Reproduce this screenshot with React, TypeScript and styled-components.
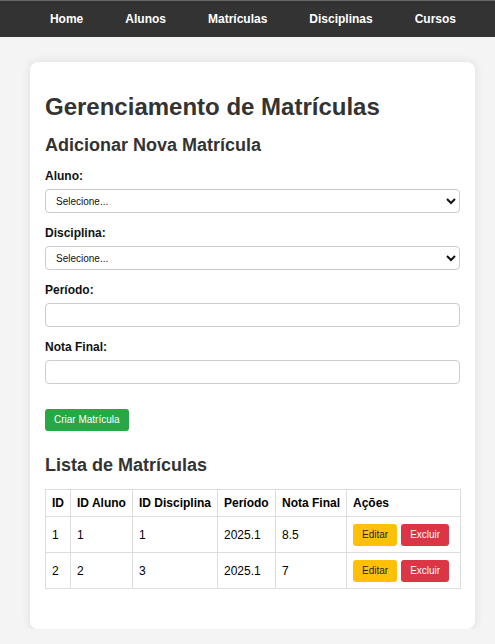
import React from "react";
import styled, { createGlobalStyle } from "styled-components";

const GlobalStyle = createGlobalStyle`
  * { box-sizing: border-box; }
  body {
    margin: 0;
    background: #f4f4f4;
    font-family: "Liberation Sans", Arial, sans-serif;
    color: #333;
  }
`;

const Nav = styled.nav`
  display: flex;
  justify-content: center;
  align-items: center;
  gap: 42px;
  height: 37px;
  padding-left: 11px;
  background: #333;
  border-top: 1px solid #666;
`;

const NavLink = styled.a`
  color: #fff;
  font-size: 12px;
  font-weight: bold;
  line-height: 14px;
  text-decoration: none;
`;

const Card = styled.main`
  margin: 25px 20px 0 30px;
  padding: 15px;
  background: #fff;
  border-radius: 8px;
  box-shadow: 0 0 10px rgba(0, 0, 0, 0.1);
`;

const Title = styled.h1`
  margin: 16px 0 14px;
  font-size: 24px;
  line-height: 28px;
  font-weight: bold;
  color: #333;
`;

const Subtitle = styled.h2<{ $top?: number; $bottom?: number }>`
  margin: ${(p) => p.$top ?? 0}px 0 ${(p) => p.$bottom ?? 13}px;
  font-size: 18px;
  line-height: 21px;
  font-weight: bold;
  color: #333;
`;

const Form = styled.form`
  display: flex;
  flex-direction: column;
`;

const Field = styled.div`
  display: flex;
  flex-direction: column;
  margin-bottom: 13px;
`;

const Label = styled.label`
  display: block;
  margin-bottom: 6px;
  font-size: 12px;
  line-height: 14px;
  font-weight: bold;
  color: #111;
`;

const Select = styled.select`
  width: 100%;
  height: 24px;
  padding: 0 6px;
  border: 1px solid #ccc;
  border-radius: 4px;
  background: #fff;
  font-family: "Liberation Sans", Arial, sans-serif;
  font-size: 10px;
  color: #111;
`;

const Input = styled.input`
  width: 100%;
  height: 24px;
  padding: 0 8px;
  border: 1px solid #ccc;
  border-radius: 4px;
  background: #fff;
  font-family: "Liberation Sans", Arial, sans-serif;
  font-size: 10px;
`;

const Button = styled.button<{ $variant: "success" | "warning" | "danger" }>`
  display: inline-flex;
  align-items: center;
  justify-content: center;
  height: 22px;
  padding: 0 9px;
  border: none;
  border-radius: 3px;
  font-family: "Liberation Sans", Arial, sans-serif;
  font-size: 10px;
  line-height: 12px;
  vertical-align: middle;
  cursor: pointer;
  background: ${(p) =>
    p.$variant === "success" ? "#28a745" : p.$variant === "warning" ? "#ffc107" : "#dc3545"};
  color: ${(p) => (p.$variant === "warning" ? "#212529" : "#fff")};
`;

const SubmitRow = styled.div`
  margin-top: 12px;
`;

const Table = styled.table`
  width: 100%;
  border-collapse: collapse;
  table-layout: fixed;
  margin-bottom: 25px;
  font-size: 12px;
  color: #000;
`;

const Th = styled.th`
  padding: 6px;
  border: 1px solid #ddd;
  text-align: left;
  font-weight: bold;
  line-height: 14px;
  white-space: nowrap;
`;

const Td = styled.td`
  height: 36px;
  padding: 0 6px;
  border: 1px solid #ddd;
  line-height: 14px;
  white-space: nowrap;
`;

const Actions = styled.div`
  display: flex;
  gap: 4px;
  align-items: center;
`;

const rows = [
  { id: 1, aluno: 1, disc: 1, periodo: "2025.1", nota: "8.5" },
  { id: 2, aluno: 2, disc: 3, periodo: "2025.1", nota: "7" },
];

const colWidths = [25, 62, 85, 58, 71, 114];

export default function App() {
  return (
    <>
      <GlobalStyle />
      <Nav>
        <NavLink href="#">Home</NavLink>
        <NavLink href="#">Alunos</NavLink>
        <NavLink href="#">Matrículas</NavLink>
        <NavLink href="#">Disciplinas</NavLink>
        <NavLink href="#">Cursos</NavLink>
      </Nav>
      <Card>
        <Title>Gerenciamento de Matrículas</Title>
        <Subtitle>Adicionar Nova Matrícula</Subtitle>
        <Form onSubmit={(e) => e.preventDefault()}>
          <Field>
            <Label htmlFor="aluno">Aluno:</Label>
            <Select id="aluno" defaultValue="">
              <option value="">Selecione...</option>
            </Select>
          </Field>
          <Field>
            <Label htmlFor="disciplina">Disciplina:</Label>
            <Select id="disciplina" defaultValue="">
              <option value="">Selecione...</option>
            </Select>
          </Field>
          <Field>
            <Label htmlFor="periodo">Período:</Label>
            <Input id="periodo" type="text" />
          </Field>
          <Field>
            <Label htmlFor="nota">Nota Final:</Label>
            <Input id="nota" type="text" />
          </Field>
          <SubmitRow>
            <Button type="submit" $variant="success">Criar Matrícula</Button>
          </SubmitRow>
        </Form>
        <Subtitle $top={24}>Lista de Matrículas</Subtitle>
        <Table>
          <colgroup>
            {colWidths.map((w, i) => (
              <col key={i} style={{ width: w }} />
            ))}
          </colgroup>
          <thead>
            <tr>
              <Th>ID</Th>
              <Th>ID Aluno</Th>
              <Th>ID Disciplina</Th>
              <Th>Período</Th>
              <Th>Nota Final</Th>
              <Th>Ações</Th>
            </tr>
          </thead>
          <tbody>
            {rows.map((r) => (
              <tr key={r.id}>
                <Td>{r.id}</Td>
                <Td>{r.aluno}</Td>
                <Td>{r.disc}</Td>
                <Td>{r.periodo}</Td>
                <Td>{r.nota}</Td>
                <Td>
                  <Actions>
                    <Button $variant="warning">Editar</Button>
                    <Button $variant="danger">Excluir</Button>
                  </Actions>
                </Td>
              </tr>
            ))}
          </tbody>
        </Table>
      </Card>
    </>
  );
}
